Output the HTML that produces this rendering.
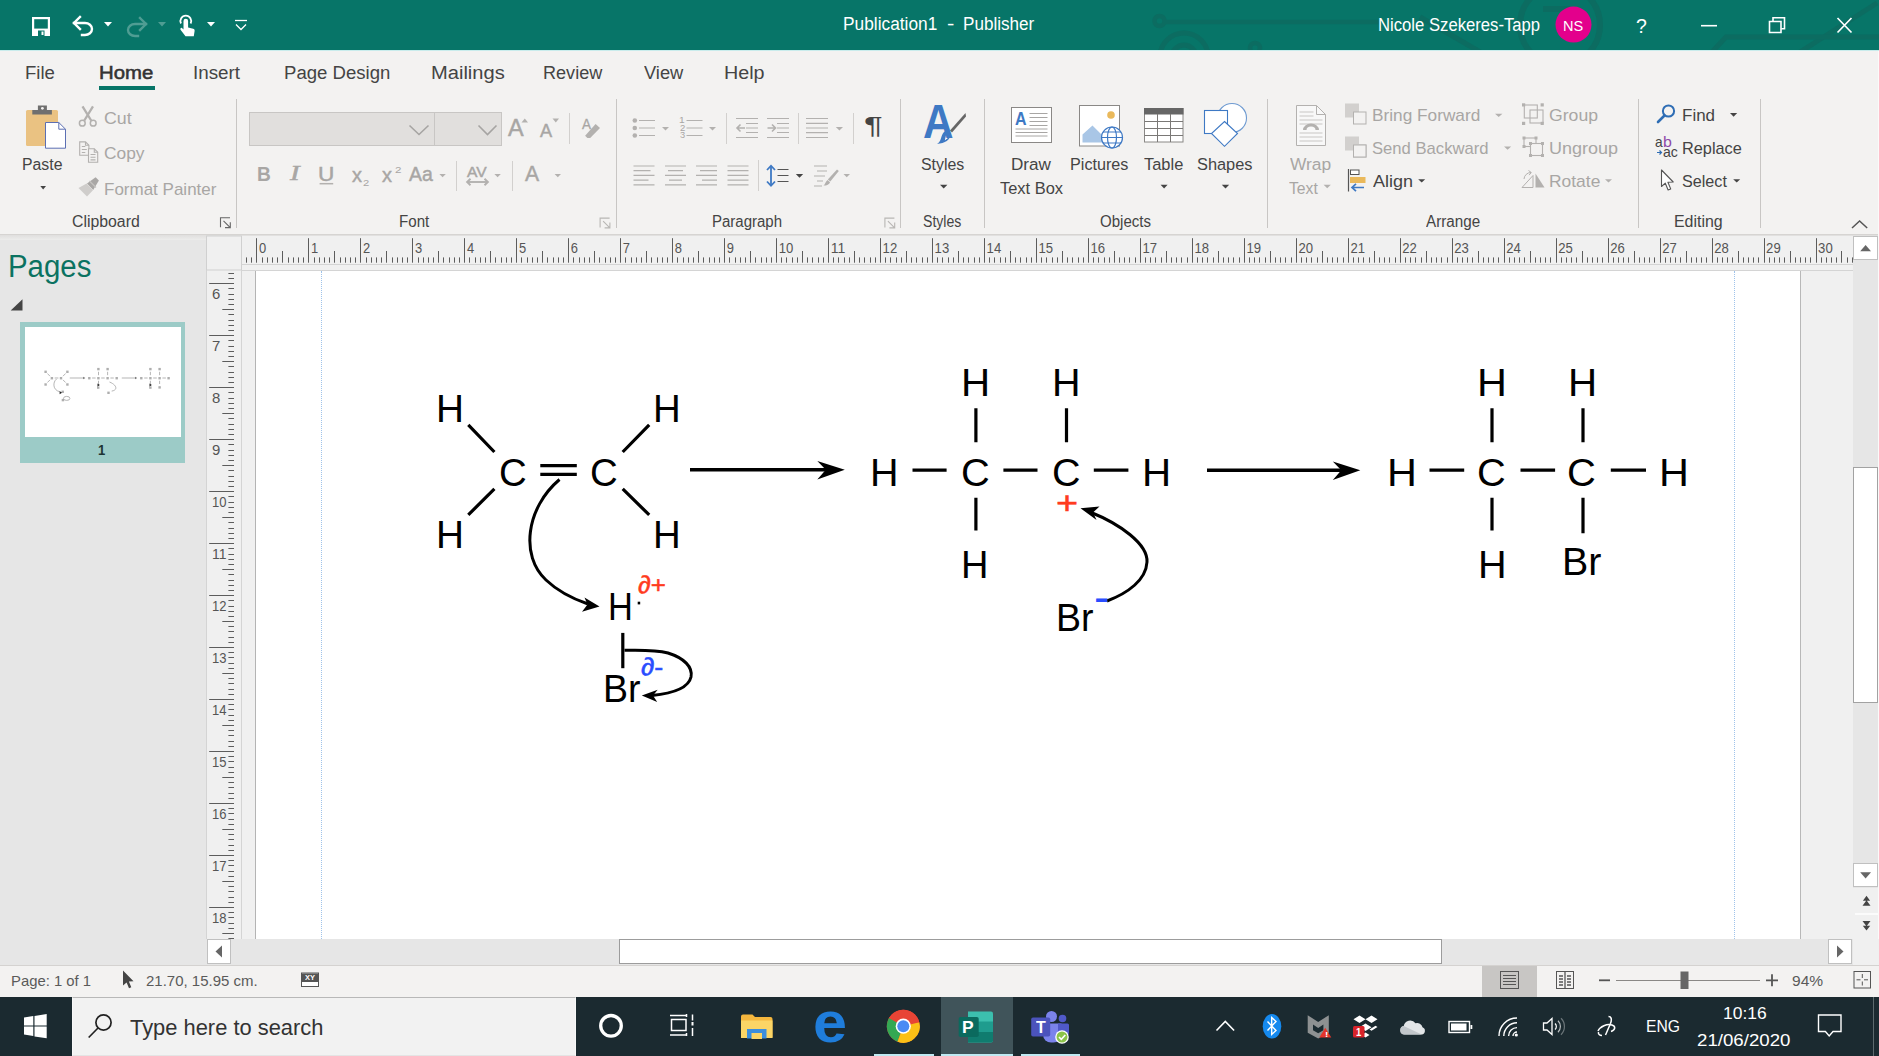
<!DOCTYPE html>
<html lang="en"><head><meta charset="utf-8"><title>Publication1 - Publisher</title>
<style>
html,body{margin:0;padding:0;}
body{width:1879px;height:1056px;overflow:hidden;position:relative;background:#f3f2f1;font-family:"Liberation Sans",sans-serif;}
.b{position:absolute;box-sizing:border-box;}
.t{position:absolute;white-space:pre;line-height:1;transform-origin:0 0;}
svg{position:absolute;left:0;top:0;overflow:visible;}
.sec{position:absolute;left:0;top:0;width:0;height:0;}
</style></head>
<body>
<section class="sec" id="title-and-tabs">
<!-- title bar -->
<div class="b " style="left:0px;top:0px;width:1879px;height:50px;background:#077568;"></div>
<div class="b " style="left:0px;top:50px;width:1879px;height:1px;background:#c9ecec;"></div>
<svg width="1879" height="50" viewBox="0 0 1879 50" style="overflow:hidden"><g fill="none" stroke="#0d6b60" stroke-width="4.500" opacity="0.850"><circle cx="1159.500" cy="21" r="5"/><path d="M1165 22H1380"/><circle cx="1184" cy="57" r="24" stroke-width="5"/><circle cx="1184" cy="57" r="12" stroke-width="5"/><circle cx="1255" cy="48" r="5"/><circle cx="1560" cy="25" r="40" stroke-width="6"/><path d="M1543 9h28" stroke-width="6"/><path d="M1877 3L1800 52" stroke-width="5"/><path d="M1879 37H1726L1712 52" stroke-width="5"/><path d="M1420 17l60 35" stroke-width="5"/></g><path d="M32 17h18v19H32z" fill="#fff"/><path d="M34.200 19.200h13.600v9.400H34.200z" fill="#077568"/><path d="M38 30.500h6.500v5.500H38z" fill="#077568"/><path d="M41.500 31.500h2v3.500h-2z" fill="#fff"/><g fill="none" stroke="#fff" stroke-width="2.4" stroke-linecap="square"><path d="M74 23h11a7 6 0 0 1 0 12h-3"/><path d="M80 17l-6 6 6 6"/></g><path d="M104 22h8l-4 4.5z" fill="#fff"/><g fill="none" stroke="#4f9d93" stroke-width="2.4" stroke-linecap="square"><path d="M146 24h-11a7 6 0 0 0 0 12h3"/><path d="M140 18l6 6-6 6"/></g><path d="M158 22h8l-4 4.5z" fill="#4f9d93"/><g fill="#fff"><path d="M183.5 21a2.3 2.3 0 0 1 4.6 0v6.5l5 1.2c1.2.3 1.7 1 1.5 2.2l-.8 5.3h-8.3l-4.8-6.2c-.8-1-.2-2.2 1-2.2l1.8 1.6z"/></g><path d="M181 23.5a5.4 5.4 0 1 1 9.6 0" fill="none" stroke="#fff" stroke-width="1.8"/><path d="M207 22h8l-4 4.5z" fill="#fff"/><path d="M235 20.5h12" stroke="#fff" stroke-width="1.3"/><path d="M236 24.5l5 5 5-5" fill="none" stroke="#fff" stroke-width="1.3"/><circle cx="1573.5" cy="24.6" r="18" fill="#e3008c"/><path d="M1701 25.7h16" stroke="#fff" stroke-width="1.6"/><g fill="none" stroke="#fff" stroke-width="1.6"><path d="M1769.5 21.5h11.5v11h-11.5z"/><path d="M1773 21v-3.2h11.5v11h-3.2"/></g><path d="M1837.5 18l14 14.5M1851.5 18l-14 14.5" stroke="#fff" stroke-width="1.7" fill="none"/></svg>
<span class="t" style="left:842.65px;top:15.50px;font-size:17.6px;color:#fff;transform:scaleX(0.9837);">Publication1</span>
<span class="t" style="left:946.56px;top:15.50px;font-size:17.6px;color:#fff;transform:scaleX(1.2571);">-</span>
<span class="t" style="left:963.36px;top:15.50px;font-size:17.6px;color:#fff;transform:scaleX(0.9713);">Publisher</span>
<span class="t" style="left:1377.50px;top:17.30px;font-size:17.6px;color:#fff;transform:scaleX(0.9471);">Nicole Szekeres-Tapp</span>
<span class="t" style="left:1562.81px;top:18.30px;font-size:15px;color:#fff;transform:scaleX(0.9695);">NS</span>
<span class="t" style="left:1636.30px;top:14.82px;font-size:21px;color:#fff;transform:scaleX(0.9268);">?</span>
<!-- ribbon tabs -->
<span class="t" style="left:24.52px;top:64.29px;font-size:18.8px;color:#444;transform:scaleX(0.9872);">File</span>
<span class="t" style="left:99.17px;top:64.29px;font-size:18.8px;color:#333;transform:scaleX(1.0834);-webkit-text-stroke:0.55px #333;">Home</span>
<div class="b " style="left:99px;top:86.3px;width:56px;height:4.2px;background:#077568;"></div>
<span class="t" style="left:193.17px;top:64.29px;font-size:18.8px;color:#444;transform:scaleX(1.0003);">Insert</span>
<span class="t" style="left:284.42px;top:64.29px;font-size:18.8px;color:#444;transform:scaleX(0.9883);">Page Design</span>
<span class="t" style="left:430.79px;top:64.29px;font-size:18.8px;color:#444;transform:scaleX(1.0704);">Mailings</span>
<span class="t" style="left:543.36px;top:64.29px;font-size:18.8px;color:#444;transform:scaleX(0.9621);">Review</span>
<span class="t" style="left:644.40px;top:64.29px;font-size:18.8px;color:#444;transform:scaleX(0.9740);">View</span>
<span class="t" style="left:724.12px;top:64.29px;font-size:18.8px;color:#444;transform:scaleX(1.0506);">Help</span>
</section>
<section class="sec" id="ribbon">
<!-- ribbon -->
<div class="b " style="left:0px;top:234px;width:1879px;height:1px;background:#d6d4d2;"></div>
<div class="b " style="left:0px;top:235px;width:1879px;height:5px;background:linear-gradient(#e0dfde,#ececeb);"></div>
<div class="b " style="left:235.9px;top:99px;width:1px;height:129px;background:#c8c6c4;"></div>
<div class="b " style="left:615.8px;top:99px;width:1px;height:129px;background:#c8c6c4;"></div>
<div class="b " style="left:900.1px;top:99px;width:1px;height:129px;background:#c8c6c4;"></div>
<div class="b " style="left:984.1px;top:99px;width:1px;height:129px;background:#c8c6c4;"></div>
<div class="b " style="left:1267.0px;top:99px;width:1px;height:129px;background:#c8c6c4;"></div>
<div class="b " style="left:1637.9px;top:99px;width:1px;height:129px;background:#c8c6c4;"></div>
<div class="b " style="left:1760.0px;top:99px;width:1px;height:129px;background:#c8c6c4;"></div>
<div class="b " style="left:569.0px;top:112.6px;width:1px;height:31.200000000000017px;background:#d2d0ce;"></div>
<div class="b " style="left:455.9px;top:161.4px;width:1px;height:30.099999999999994px;background:#d2d0ce;"></div>
<div class="b " style="left:512.0px;top:161.4px;width:1px;height:30.099999999999994px;background:#d2d0ce;"></div>
<div class="b " style="left:726.1px;top:113px;width:1px;height:31px;background:#d2d0ce;"></div>
<div class="b " style="left:797.8px;top:113px;width:1px;height:31px;background:#d2d0ce;"></div>
<div class="b " style="left:852.8px;top:113px;width:1px;height:31px;background:#d2d0ce;"></div>
<div class="b " style="left:757.9px;top:160.4px;width:1px;height:31.099999999999994px;background:#d2d0ce;"></div>
<div class="b " style="left:249px;top:112px;width:185.5px;height:33.5px;background:#e1dfdd;border:1px solid #c8c6c4"></div>
<div class="b " style="left:433.5px;top:112px;width:68.5px;height:33.5px;background:#e1dfdd;border:1px solid #c8c6c4"></div>
<svg width="1879" height="240" viewBox="0 0 1879 240"><rect x="26" y="110" width="32" height="36" rx="1.5" fill="#eac282"/><path d="M32.3 110h19.6v4.6H32.3z M37.9 105.4h9v5h-9z" fill="#6f6f6f"/><circle cx="42.4" cy="108.3" r="1.4" fill="#f3f2f1"/><path d="M45.5 122.5h13.3l6.7 6.7v19H45.5z" fill="#fff" stroke="#5c6fb3" stroke-width="1"/><path d="M58.8 122.5v6.7h6.7" fill="none" stroke="#5c6fb3" stroke-width="1"/><path d="M40.3 186H46L43.15 189.6z" fill="#444"/><g fill="none" stroke="#b3b1af"><path d="M82.500 106.300l8.700 14.200M93 106.300l-8.700 14.200" stroke-width="2.300"/><circle cx="82.300" cy="123.200" r="2.900" stroke-width="1.500"/><circle cx="93.200" cy="123.200" r="2.900" stroke-width="1.500"/></g><g fill="none" stroke="#b3b1af" stroke-width="1.100"><path d="M79.700 141.900h5.800l3.400 3.400v10H79.700z"/><path d="M85.500 141.900v3.400h3.400"/><path d="M81.800 146.500h3.500M81.800 149.500h5M81.800 152.500h3.500"/><path d="M88.500 148.800h5.800l3.400 3.400v10h-9.200z" fill="#f3f2f1"/><path d="M94.300 148.800v3.400h3.400"/><path d="M90.500 154.500h5M90.500 157.200h5M90.500 159.900h5"/></g><path d="M95.600 177.200l3.300 3.300-5.700 9.500-6.200-6.600z" fill="#a9a7a5"/><path d="M86.600 183.600l6.400 6.600-6 6.400-8.500-8.500z" fill="#cfcdcb"/><path d="M89.500 181l6.500 6.500" stroke="#c4c2c0" stroke-width="1.200"/><g fill="none" stroke="#666" stroke-width="1.1"><path d="M230 217.8H220.5V227.3"/><path d="M223.5 220.8L230 227.3M230.3 222.3V227.60000000000002H225"/></g><g fill="none" stroke="#b8b6b4" stroke-width="1.1"><path d="M609.6 218.1H600.1V227.6"/><path d="M603.1 221.1L609.6 227.6M609.9 222.6V227.9H604.6"/></g><g fill="none" stroke="#b8b6b4" stroke-width="1.1"><path d="M894.4 218.1H884.9V227.6"/><path d="M887.9 221.1L894.4 227.6M894.6999999999999 222.6V227.9H889.4"/></g><path d="M409.5 125.5L419.0 134.5L428.5 125.5" fill="none" stroke="#a6a4a2" stroke-width="1.6"/><path d="M478.5 125.5L487.5 134.5L496.5 125.5" fill="none" stroke="#a6a4a2" stroke-width="1.6"/><path d="M521.5 122.5h6.5l-3.25-4z" fill="#b3b1af"/><path d="M552.5 118.5h6.5l-3.25 4z" fill="#b3b1af"/><path d="M595.600 124.100l4.400 3.900-9.800 10h-2.800l-2.300-2.200z" fill="#b3b1af"/><path d="M439.4 174H445.8L442.6 177.2z" fill="#b3b1af"/><path d="M494.4 174H500.8L497.6 177.2z" fill="#b3b1af"/><path d="M554.6 174H561L557.8 177.2z" fill="#b3b1af"/><path d="M319.600 183.700h13.600" stroke="#b3b1af" stroke-width="1.500"/><g fill="none" stroke="#b3b1af" stroke-width="1.900"><path d="M467.500 182h20"/><path d="M470.500 178.700l-3.400 3.300 3.400 3.300M484.500 178.700l3.400 3.300-3.400 3.300"/></g><g stroke="#b3b1af" stroke-width="1.2" fill="none"><path d="M639 120.500h16M639 128h16M639 135.500h16"/></g><g fill="#b3b1af"><circle cx="634.800" cy="120.500" r="2.300"/><circle cx="634.800" cy="128" r="2.300"/><circle cx="634.800" cy="135.500" r="2.300"/></g><path d="M662 127H669L665.5 130.4z" fill="#b3b1af"/><g stroke="#b3b1af" stroke-width="1.2" fill="none"><path d="M686.500 120.500h16M686.500 128h16M686.500 135.500h16"/></g><path d="M709 127H716L712.5 130.4z" fill="#b3b1af"/><g stroke="#b3b1af" stroke-width="1.2" fill="none"><path d="M736 118.500h22M746 123.500h12M746 128h12M746 132.500h12M736 137.500h22"/><path d="M737 128h8M740.500 124.500l-3.500 3.500 3.500 3.500" stroke-width="1.600"/></g><g stroke="#b3b1af" stroke-width="1.2" fill="none"><path d="M767 118.500h22M777 123.500h12M777 128h12M777 132.500h12M767 137.500h22"/><path d="M767.500 128h8M772 124.500l3.500 3.500-3.500 3.500" stroke-width="1.600"/></g><g stroke="#b3b1af" stroke-width="1.2" fill="none"><path d="M806 118.500h22M806 123.300h22M806 128h22M806 132.700h22M806 137.500h22"/></g><path d="M835.8 127H843L839.4 130.4z" fill="#b3b1af"/><path d="M633.5 166.0h21M633.5 170.7h17M633.5 175.4h21M633.5 180.1h15M633.5 184.8h21" stroke="#b3b1af" stroke-width="1.2" fill="none"/><path d="M665.0 166.0h21M668.0 170.7h15M665.0 175.4h21M669.0 180.1h13M665.0 184.8h21" stroke="#b3b1af" stroke-width="1.2" fill="none"/><path d="M696.0 166.0h21M700.0 170.7h17M696.0 175.4h21M702.0 180.1h15M696.0 184.8h21" stroke="#b3b1af" stroke-width="1.2" fill="none"/><path d="M727.5 166.0h21M727.5 170.7h21M727.5 175.4h21M727.5 180.1h21M727.5 184.8h21" stroke="#b3b1af" stroke-width="1.2" fill="none"/><g fill="none" stroke="#3e79c4" stroke-width="1.800"><path d="M771 166v19"/><path d="M767 170l4-4.300 4 4.300M767 181.500l4 4.300 4-4.300"/></g><path d="M777.500 169.500h11M777.500 175.500h11M777.500 181.500h11" stroke="#555" stroke-width="1.100"/><path d="M795.8 174H803.2L799.5 177.7z" fill="#444"/><g stroke="#b3b1af" stroke-width="1.2" fill="none"><path d="M814 166h13M817 171h10M814 176h11M817 181h6M814 186h8"/></g><path d="M837 169.500l1.800 1.500-8.500 10.500-2.500-2z" fill="#b3b1af"/><path d="M827.500 180l2.600 2.200c-1 2.500-3.500 3.500-6.600 3.400 1.800-1.200 1.800-3.800 4-5.600z" fill="#b3b1af"/><path d="M843.5 174H850L846.75 177.2z" fill="#b3b1af"/><path d="M965.500 113l-15.500 17.500 2 2 14-16z" fill="#666"/><path d="M947 130.200l4 3.600c-.5 6-6 9.700-14 10.200 3.500-2 3.700-5.200 5-8.800 1-2.600 2.700-4.400 5-5z" fill="#3e79c4"/><path d="M947.300 131.800l2.700 2.400c-.6 2.500-2.500 4.700-5.200 6 1.200-3 1-6.400 2.500-8.400z" fill="#fff"/><path d="M940 184.8H947.4L943.7 188.6z" fill="#444"/><rect x="1011.500" y="107.500" width="40" height="35" fill="#fff" stroke="#8a8886" stroke-width="1"/><path d="M1029.500 113.500h18M1029.500 117.500h18M1029.500 121.500h18M1029.500 125.500h18M1015.500 129h32M1015.500 132.500h32M1015.500 136h32" stroke="#a8a6a4" stroke-width="1"/><rect x="1079.500" y="105.500" width="40" height="40.500" fill="#fff" stroke="#8a8886" stroke-width="1"/><circle cx="1111" cy="115" r="3.800" fill="#eab95b"/><path d="M1082.500 142.500v-8l10-9 8.500 8.500 2.500-2.500v11z" fill="#a9c6e6"/><g fill="#fff" stroke="#3e79c4" stroke-width="1.200"><circle cx="1112" cy="137.500" r="10.500"/><ellipse cx="1112" cy="137.500" rx="4.500" ry="10.500" fill="none"/><path d="M1101.500 137.500h21M1103 132h18M1103 143h18" fill="none"/></g><rect x="1144.500" y="108.500" width="38.500" height="33.500" fill="#fff" stroke="#8a8886" stroke-width="1"/><rect x="1144" y="108" width="39.500" height="6.500" fill="#666"/><path d="M1157.500 114v28M1170.500 114v28M1144.500 121.500h38.500M1144.500 128.500h38.500M1144.500 135.500h38.500" stroke="#7a7876" stroke-width="1" fill="none"/><path d="M1160.6 184.8H1167.6L1164.1 188.6z" fill="#444"/><g fill="#fff" stroke="#3e79c4" stroke-width="1.100"><circle cx="1232" cy="118" r="14.500" stroke="#6f9bd1"/><rect x="1204.500" y="110.500" width="23" height="23"/><path d="M1224.500 121.500l13 12-13 12.800-13-12.800z"/></g><path d="M1221.8 184.8H1229.2L1225.5 188.6z" fill="#444"/><path d="M1296.500 105.500h20l9 9v31h-29z" fill="#f8f8f8" stroke="#b3b1af" stroke-width="1"/><path d="M1316.500 105.500v9h9" fill="none" stroke="#b3b1af"/><path d="M1299.500 112h14M1299.500 116h14M1299.500 120h23M1299.500 124h23M1299.500 133h23M1299.500 137h23M1299.500 141h23" stroke="#c8c6c4" stroke-width="1"/><path d="M1303 130a8 6.500 0 0 1 16 0h-3.500a4.500 3.500 0 0 0-9 0z" fill="#b3b1af"/><path d="M1323.6 184.8H1330.8L1327.1999999999998 188.2z" fill="#b3b1af"/><rect x="1345" y="103.500" width="14" height="14" fill="#d2d0ce"/><rect x="1353.500" y="112" width="12.500" height="12" fill="#f3f2f1" stroke="#b3b1af" stroke-width="1"/><rect x="1353.500" y="145" width="12.500" height="12" fill="#f3f2f1" stroke="#b3b1af" stroke-width="1"/><rect x="1345" y="136.500" width="14" height="14" fill="#d2d0ce"/><rect x="1353.500" y="145" width="12.500" height="12" fill="#f3f2f1" stroke="#b3b1af" stroke-width="1"/><path d="M1495 113.8H1502.4L1498.7 117z" fill="#b3b1af"/><path d="M1504 146.5H1511.2L1507.6 149.7z" fill="#b3b1af"/><path d="M1348.500 169v22.500" stroke="#555" stroke-width="1.200"/><rect x="1350.500" y="170" width="8.500" height="4.500" fill="#fff" stroke="#555" stroke-width="1"/><rect x="1350" y="177" width="15.500" height="6" fill="#eab95b"/><path d="M1352 187.500h12M1356 183.800l-4 3.700 4 3.700" fill="none" stroke="#3e79c4" stroke-width="1.700"/><path d="M1418.2 179.2H1425.2L1421.7 182.6z" fill="#444"/><g fill="none" stroke="#b3b1af" stroke-width="1.100"><rect x="1524.300" y="105" width="13" height="13"/><rect x="1530" y="110" width="13" height="13"/></g><g fill="#b3b1af"><rect x="1522" y="103.300" width="3.200" height="3.200"/><rect x="1540.600" y="103.300" width="3.200" height="3.200"/><rect x="1522" y="121.800" width="3.200" height="3.200"/><rect x="1540.600" y="121.800" width="3.200" height="3.200"/></g><g fill="none" stroke="#b3b1af" stroke-width="1.100"><rect x="1524" y="138" width="12" height="8.500"/><rect x="1530.500" y="143.500" width="12" height="12" fill="#f3f2f1"/></g><g fill="#b3b1af"><rect x="1522.500" y="136.500" width="3" height="3"/><rect x="1534.500" y="136.500" width="3" height="3"/><rect x="1522.500" y="145" width="3" height="3"/><rect x="1529" y="142" width="3" height="3"/><rect x="1541" y="142" width="3" height="3"/><rect x="1529" y="154" width="3" height="3"/><rect x="1541" y="154" width="3" height="3"/></g><path d="M1535.500 173.500v14h9z" fill="#b3b1af"/><path d="M1533 175.500v12h-11z" fill="none" stroke="#b3b1af" stroke-width="1"/><path d="M1524 179a7 7 0 0 1 7-6.500M1528.500 170.500l2.800 2-2.200 2.600" fill="none" stroke="#b3b1af" stroke-width="1"/><path d="M1605 179.2H1612L1608.5 182.6z" fill="#b3b1af"/><circle cx="1668.500" cy="111" r="5.600" fill="none" stroke="#2e6db4" stroke-width="2"/><path d="M1664.500 115.500l-6.500 6.500" stroke="#2e6db4" stroke-width="2.600" stroke-linecap="round"/><path d="M1730 113H1737.2L1733.6 116.8z" fill="#444"/><path d="M1657 152.500h4.500M1659.500 150.500l2 2-2 2" fill="none" stroke="#2e6db4" stroke-width="1.200"/><path d="M1661.500 170v16.500l3.800-3.300 2.800 6.800 2.600-1.100-2.800-6.600 5.300-.3z" fill="#fff" stroke="#555" stroke-width="1.100" stroke-linejoin="round"/><path d="M1733.2 179.2H1740.2L1736.7 182.6z" fill="#444"/><path d="M1852 228l7.600-7 7.600 7" fill="none" stroke="#555" stroke-width="1.500"/></svg>
<span class="t" style="left:22.13px;top:156.99px;font-size:15.6px;color:#444;transform:scaleX(1.0141);">Paste</span>
<span class="t" style="left:103.62px;top:110.21px;font-size:17px;color:#a8a6a4;transform:scaleX(1.0466);">Cut</span>
<span class="t" style="left:103.64px;top:145.01px;font-size:17px;color:#a8a6a4;transform:scaleX(1.0196);">Copy</span>
<span class="t" style="left:103.92px;top:180.61px;font-size:17px;color:#a8a6a4;transform:scaleX(1.0001);">Format Painter</span>
<span class="t" style="left:72.26px;top:213.96px;font-size:16px;color:#444;transform:scaleX(0.9893);">Clipboard</span>
<span class="t" style="left:508.00px;top:117.11px;font-size:23.5px;color:#a8a6a4;transform:scaleX(0.9968);-webkit-text-stroke:0.45px;">A</span>
<span class="t" style="left:539.80px;top:120.92px;font-size:19px;color:#a8a6a4;transform:scaleX(0.9569);-webkit-text-stroke:0.45px;">A</span>
<span class="t" style="left:581.90px;top:115.70px;font-size:15px;color:#a8a6a4;transform:scaleX(0.9000);-webkit-text-stroke:0.3px;">A</span>
<span class="t" style="left:257.22px;top:164.12px;font-size:20.3px;color:#a8a6a4;font-weight:700;transform:scaleX(0.9440);">B</span>
<span class="t" style="left:289.67px;top:163.32px;font-size:21px;color:#a8a6a4;font-style:italic;transform:scaleX(1.3750);font-family:'Liberation Serif',serif;-webkit-text-stroke:0.5px;">I</span>
<span class="t" style="left:318.30px;top:164.47px;font-size:20px;color:#a8a6a4;transform:scaleX(1.1304);-webkit-text-stroke:0.45px;">U</span>
<span class="t" style="left:351.68px;top:164.57px;font-size:20px;color:#a8a6a4;transform:scaleX(0.9949);-webkit-text-stroke:0.45px;">x</span>
<span class="t" style="left:363.06px;top:178.26px;font-size:9.5px;color:#a8a6a4;transform:scaleX(1.1778);">2</span>
<span class="t" style="left:382.18px;top:164.57px;font-size:20px;color:#a8a6a4;transform:scaleX(0.9949);-webkit-text-stroke:0.45px;">x</span>
<span class="t" style="left:395.04px;top:164.96px;font-size:9.5px;color:#a8a6a4;transform:scaleX(1.2222);">2</span>
<span class="t" style="left:409.30px;top:164.15px;font-size:20.5px;color:#a8a6a4;transform:scaleX(0.9494);-webkit-text-stroke:0.45px;">Aa</span>
<span class="t" style="left:467.30px;top:163.85px;font-size:15.3px;color:#a8a6a4;transform:scaleX(1.0197);-webkit-text-stroke:0.45px;">AV</span>
<span class="t" style="left:524.80px;top:163.11px;font-size:22.2px;color:#a8a6a4;transform:scaleX(0.9546);-webkit-text-stroke:0.45px;">A</span>
<span class="t" style="left:398.82px;top:214.06px;font-size:16px;color:#444;transform:scaleX(0.9448);">Font</span>
<span class="t" style="left:679.25px;top:116.30px;font-size:8.5px;color:#a8a6a4;transform:scaleX(1.2000);">1</span>
<span class="t" style="left:679.58px;top:123.80px;font-size:8.5px;color:#a8a6a4;transform:scaleX(1.1250);">2</span>
<span class="t" style="left:679.73px;top:131.30px;font-size:8.5px;color:#a8a6a4;transform:scaleX(1.0909);">3</span>
<span class="t" style="left:863.73px;top:114.18px;font-size:24px;color:#444;transform:scaleX(1.4545);">¶</span>
<span class="t" style="left:711.53px;top:214.06px;font-size:16px;color:#444;transform:scaleX(0.9373);">Paragraph</span>
<span class="t" style="left:922.74px;top:98.29px;font-size:47.5px;color:#3e79c4;font-weight:700;transform:scaleX(0.8911);">A</span>
<span class="t" style="left:921.09px;top:156.00px;font-size:16.3px;color:#444;transform:scaleX(0.9762);">Styles</span>
<span class="t" style="left:923.25px;top:214.06px;font-size:16px;color:#444;transform:scaleX(0.8811);">Styles</span>
<span class="t" style="left:1015.48px;top:110.24px;font-size:18.5px;color:#3e79c4;font-weight:700;transform:scaleX(0.8640);">A</span>
<span class="t" style="left:1011.49px;top:156.00px;font-size:16.3px;color:#444;transform:scaleX(1.0519);">Draw</span>
<span class="t" style="left:1000.05px;top:179.80px;font-size:16.3px;color:#444;transform:scaleX(1.0097);">Text Box</span>
<span class="t" style="left:1070.06px;top:156.00px;font-size:16.3px;color:#444;transform:scaleX(0.9931);">Pictures</span>
<span class="t" style="left:1143.75px;top:156.00px;font-size:16.3px;color:#444;transform:scaleX(1.0100);">Table</span>
<span class="t" style="left:1196.87px;top:156.00px;font-size:16.3px;color:#444;transform:scaleX(1.0051);">Shapes</span>
<span class="t" style="left:1099.70px;top:214.06px;font-size:16px;color:#444;transform:scaleX(0.9398);">Objects</span>
<span class="t" style="left:1289.70px;top:156.00px;font-size:16.3px;color:#a8a6a4;transform:scaleX(1.0662);">Wrap</span>
<span class="t" style="left:1289.06px;top:179.80px;font-size:16.3px;color:#a8a6a4;transform:scaleX(0.9659);">Text</span>
<span class="t" style="left:1371.61px;top:107.21px;font-size:17px;color:#a8a6a4;transform:scaleX(1.0144);">Bring Forward</span>
<span class="t" style="left:1372.27px;top:140.21px;font-size:17px;color:#a8a6a4;transform:scaleX(0.9784);">Send Backward</span>
<span class="t" style="left:1372.50px;top:173.01px;font-size:17px;color:#444;transform:scaleX(1.0593);">Align</span>
<span class="t" style="left:1548.82px;top:107.21px;font-size:17px;color:#a8a6a4;transform:scaleX(1.0373);">Group</span>
<span class="t" style="left:1548.68px;top:140.21px;font-size:17px;color:#a8a6a4;transform:scaleX(1.0592);">Ungroup</span>
<span class="t" style="left:1548.59px;top:173.01px;font-size:17px;color:#a8a6a4;transform:scaleX(1.0248);">Rotate</span>
<span class="t" style="left:1425.50px;top:214.06px;font-size:16px;color:#444;transform:scaleX(0.9507);">Arrange</span>
<span class="t" style="left:1681.73px;top:107.21px;font-size:17px;color:#444;transform:scaleX(0.9995);">Find</span>
<span class="t" style="left:1681.78px;top:140.41px;font-size:17px;color:#444;transform:scaleX(0.9587);">Replace</span>
<span class="t" style="left:1681.99px;top:173.11px;font-size:17px;color:#444;transform:scaleX(0.9504);">Select</span>
<span class="t" style="left:1674.36px;top:213.76px;font-size:16px;color:#444;transform:scaleX(0.9947);">Editing</span>
<span class="t" style="left:1654.63px;top:133.80px;font-size:15px;color:#444;transform:scaleX(0.9161);">a</span>
<span class="t" style="left:1663.27px;top:133.80px;font-size:15px;color:#8e4aa8;transform:scaleX(1.0618);">b</span>
<span class="t" style="left:1662.91px;top:144.30px;font-size:15px;color:#444;transform:scaleX(0.9365);">ac</span>
</section>
<section class="sec" id="workspace">
<!-- page navigation pane -->
<div class="b " style="left:0px;top:240px;width:206px;height:725px;background:#e6e6e6;"></div>
<span class="t" style="left:8.33px;top:251.06px;font-size:31px;color:#0b7261;transform:scaleX(0.9491);">Pages</span>
<div class="b " style="left:20.3px;top:322px;width:164.7px;height:141.2px;background:#9ccbc7;"></div>
<div class="b " style="left:24.6px;top:327px;width:156px;height:110px;background:#fff;"></div>
<span class="t" style="left:98.14px;top:442.10px;font-size:15px;color:#1e3433;font-weight:700;transform:scaleX(0.8702);">1</span>
<!-- workspace -->
<div class="b " style="left:206px;top:235.5px;width:1647.4px;height:704px;background:#f0f0f0;"></div>
<div class="b " style="left:255px;top:270.5px;width:1546px;height:668.5px;background:#fff;border-left:1px solid #b4b4b4;border-right:1px solid #b8b8b8"></div>
<div class="b " style="left:320.9px;top:271px;width:0px;height:668px;background:transparent;border-left:1px dotted #9fc3ea"></div>
<div class="b " style="left:1733.8px;top:271px;width:0px;height:668px;background:transparent;border-left:1px dotted #9fc3ea"></div>
<svg width="1879" height="1056" viewBox="0 0 1879 1056"><path d="M22.500 299.300v11.200h-11.800z" fill="#444"/><rect x="206.500" y="236" width="35" height="34" fill="#f0f0f0" stroke="#d0d0d0"/><path d="M241.500 264.500H1853M241.500 270.500H1853M206.500 270v669.500M241.500 270v669.500" stroke="#d4d4d4" fill="none"/><path d="M246.5 257.4V262.700M251.5 257.4V262.700M256.5 238.2V262.700M262.5 257.4V262.700M267.5 257.4V262.700M272.5 257.4V262.700M277.5 257.4V262.700M282.5 251.0V262.700M288.5 257.4V262.700M293.5 257.4V262.700M298.5 257.4V262.700M303.5 257.4V262.700M308.5 238.2V262.700M314.5 257.4V262.700M319.5 257.4V262.700M324.5 257.4V262.700M329.5 257.4V262.700M334.5 251.0V262.700M340.5 257.4V262.700M345.5 257.4V262.700M350.5 257.4V262.700M355.5 257.4V262.700M360.5 238.2V262.700M366.5 257.4V262.700M371.5 257.4V262.700M376.5 257.4V262.700M381.5 257.4V262.700M386.5 251.0V262.700M392.5 257.4V262.700M397.5 257.4V262.700M402.5 257.4V262.700M407.5 257.4V262.700M412.5 238.2V262.700M418.5 257.4V262.700M423.5 257.4V262.700M428.5 257.4V262.700M433.5 257.4V262.700M438.5 251.0V262.700M443.5 257.4V262.700M449.5 257.4V262.700M454.5 257.4V262.700M459.5 257.4V262.700M464.5 238.2V262.700M469.5 257.4V262.700M475.5 257.4V262.700M480.5 257.4V262.700M485.5 257.4V262.700M490.5 251.0V262.700M495.5 257.4V262.700M501.5 257.4V262.700M506.5 257.4V262.700M511.5 257.4V262.700M516.5 238.2V262.700M521.5 257.4V262.700M527.5 257.4V262.700M532.5 257.4V262.700M537.5 257.4V262.700M542.5 251.0V262.700M547.5 257.4V262.700M553.5 257.4V262.700M558.5 257.4V262.700M563.5 257.4V262.700M568.5 238.2V262.700M573.5 257.4V262.700M579.5 257.4V262.700M584.5 257.4V262.700M589.5 257.4V262.700M594.5 251.0V262.700M599.5 257.4V262.700M605.5 257.4V262.700M610.5 257.4V262.700M615.5 257.4V262.700M620.5 238.2V262.700M625.5 257.4V262.700M631.5 257.4V262.700M636.5 257.4V262.700M641.5 257.4V262.700M646.5 251.0V262.700M651.5 257.4V262.700M657.5 257.4V262.700M662.5 257.4V262.700M667.5 257.4V262.700M672.5 238.2V262.700M677.5 257.4V262.700M683.5 257.4V262.700M688.5 257.4V262.700M693.5 257.4V262.700M698.5 251.0V262.700M703.5 257.4V262.700M709.5 257.4V262.700M714.5 257.4V262.700M719.5 257.4V262.700M724.5 238.2V262.700M729.5 257.4V262.700M735.5 257.4V262.700M740.5 257.4V262.700M745.5 257.4V262.700M750.5 251.0V262.700M755.5 257.4V262.700M761.5 257.4V262.700M766.5 257.4V262.700M771.5 257.4V262.700M776.5 238.2V262.700M781.5 257.4V262.700M786.5 257.4V262.700M792.5 257.4V262.700M797.5 257.4V262.700M802.5 251.0V262.700M807.5 257.4V262.700M812.5 257.4V262.700M818.5 257.4V262.700M823.5 257.4V262.700M828.5 238.2V262.700M833.5 257.4V262.700M838.5 257.4V262.700M844.5 257.4V262.700M849.5 257.4V262.700M854.5 251.0V262.700M859.5 257.4V262.700M864.5 257.4V262.700M870.5 257.4V262.700M875.5 257.4V262.700M880.5 238.2V262.700M885.5 257.4V262.700M890.5 257.4V262.700M896.5 257.4V262.700M901.5 257.4V262.700M906.5 251.0V262.700M911.5 257.4V262.700M916.5 257.4V262.700M922.5 257.4V262.700M927.5 257.4V262.700M932.5 238.2V262.700M937.5 257.4V262.700M942.5 257.4V262.700M948.5 257.4V262.700M953.5 257.4V262.700M958.5 251.0V262.700M963.5 257.4V262.700M968.5 257.4V262.700M974.5 257.4V262.700M979.5 257.4V262.700M984.5 238.2V262.700M989.5 257.4V262.700M994.5 257.4V262.700M1000.5 257.4V262.700M1005.5 257.4V262.700M1010.5 251.0V262.700M1015.5 257.4V262.700M1020.5 257.4V262.700M1026.5 257.4V262.700M1031.5 257.4V262.700M1036.5 238.2V262.700M1041.5 257.4V262.700M1046.5 257.4V262.700M1052.5 257.4V262.700M1057.5 257.4V262.700M1062.5 251.0V262.700M1067.5 257.4V262.700M1072.5 257.4V262.700M1078.5 257.4V262.700M1083.5 257.4V262.700M1088.5 238.2V262.700M1093.5 257.4V262.700M1098.5 257.4V262.700M1104.5 257.4V262.700M1109.5 257.4V262.700M1114.5 251.0V262.700M1119.5 257.4V262.700M1124.5 257.4V262.700M1129.5 257.4V262.700M1135.5 257.4V262.700M1140.5 238.2V262.700M1145.5 257.4V262.700M1150.5 257.4V262.700M1155.5 257.4V262.700M1161.5 257.4V262.700M1166.5 251.0V262.700M1171.5 257.4V262.700M1176.5 257.4V262.700M1181.5 257.4V262.700M1187.5 257.4V262.700M1192.5 238.2V262.700M1197.5 257.4V262.700M1202.5 257.4V262.700M1207.5 257.4V262.700M1213.5 257.4V262.700M1218.5 251.0V262.700M1223.5 257.4V262.700M1228.5 257.4V262.700M1233.5 257.4V262.700M1239.5 257.4V262.700M1244.5 238.2V262.700M1249.5 257.4V262.700M1254.5 257.4V262.700M1259.5 257.4V262.700M1265.5 257.4V262.700M1270.5 251.0V262.700M1275.5 257.4V262.700M1280.5 257.4V262.700M1285.5 257.4V262.700M1291.5 257.4V262.700M1296.5 238.2V262.700M1301.5 257.4V262.700M1306.5 257.4V262.700M1311.5 257.4V262.700M1317.5 257.4V262.700M1322.5 251.0V262.700M1327.5 257.4V262.700M1332.5 257.4V262.700M1337.5 257.4V262.700M1343.5 257.4V262.700M1348.5 238.2V262.700M1353.5 257.4V262.700M1358.5 257.4V262.700M1363.5 257.4V262.700M1369.5 257.4V262.700M1374.5 251.0V262.700M1379.5 257.4V262.700M1384.5 257.4V262.700M1389.5 257.4V262.700M1395.5 257.4V262.700M1400.5 238.2V262.700M1405.5 257.4V262.700M1410.5 257.4V262.700M1415.5 257.4V262.700M1421.5 257.4V262.700M1426.5 251.0V262.700M1431.5 257.4V262.700M1436.5 257.4V262.700M1441.5 257.4V262.700M1447.5 257.4V262.700M1452.5 238.2V262.700M1457.5 257.4V262.700M1462.5 257.4V262.700M1467.5 257.4V262.700M1472.5 257.4V262.700M1478.5 251.0V262.700M1483.5 257.4V262.700M1488.5 257.4V262.700M1493.5 257.4V262.700M1498.5 257.4V262.700M1504.5 238.2V262.700M1509.5 257.4V262.700M1514.5 257.4V262.700M1519.5 257.4V262.700M1524.5 257.4V262.700M1530.5 251.0V262.700M1535.5 257.4V262.700M1540.5 257.4V262.700M1545.5 257.4V262.700M1550.5 257.4V262.700M1556.5 238.2V262.700M1561.5 257.4V262.700M1566.5 257.4V262.700M1571.5 257.4V262.700M1576.5 257.4V262.700M1582.5 251.0V262.700M1587.5 257.4V262.700M1592.5 257.4V262.700M1597.5 257.4V262.700M1602.5 257.4V262.700M1608.5 238.2V262.700M1613.5 257.4V262.700M1618.5 257.4V262.700M1623.5 257.4V262.700M1628.5 257.4V262.700M1634.5 251.0V262.700M1639.5 257.4V262.700M1644.5 257.4V262.700M1649.5 257.4V262.700M1654.5 257.4V262.700M1660.5 238.2V262.700M1665.5 257.4V262.700M1670.5 257.4V262.700M1675.5 257.4V262.700M1680.5 257.4V262.700M1686.5 251.0V262.700M1691.5 257.4V262.700M1696.5 257.4V262.700M1701.5 257.4V262.700M1706.5 257.4V262.700M1712.5 238.2V262.700M1717.5 257.4V262.700M1722.5 257.4V262.700M1727.5 257.4V262.700M1732.5 257.4V262.700M1738.5 251.0V262.700M1743.5 257.4V262.700M1748.5 257.4V262.700M1753.5 257.4V262.700M1758.5 257.4V262.700M1764.5 238.2V262.700M1769.5 257.4V262.700M1774.5 257.4V262.700M1779.5 257.4V262.700M1784.5 257.4V262.700M1790.5 251.0V262.700M1795.5 257.4V262.700M1800.5 257.4V262.700M1805.5 257.4V262.700M1810.5 257.4V262.700M1816.5 238.2V262.700M1821.5 257.4V262.700M1826.5 257.4V262.700M1831.5 257.4V262.700M1836.5 257.4V262.700M1841.5 251.0V262.700M1847.5 257.4V262.700M1852.5 257.4V262.700" stroke="#5c5c5c" stroke-width="1" fill="none"/><path d="M228.4 273.5H234M228.4 278.5H234M209.2 283.5H234M228.4 288.5H234M228.4 294.5H234M228.4 299.5H234M228.4 304.5H234M222.3 309.5H234M228.4 314.5H234M228.4 320.5H234M228.4 325.5H234M228.4 330.5H234M209.2 335.5H234M228.4 340.5H234M228.4 346.5H234M228.4 351.5H234M228.4 356.5H234M222.3 361.5H234M228.4 366.5H234M228.4 372.5H234M228.4 377.5H234M228.4 382.5H234M209.2 387.5H234M228.4 392.5H234M228.4 398.5H234M228.4 403.5H234M228.4 408.5H234M222.3 413.5H234M228.4 418.5H234M228.4 424.5H234M228.4 429.5H234M228.4 434.5H234M209.2 439.5H234M228.4 444.5H234M228.4 450.5H234M228.4 455.5H234M228.4 460.5H234M222.3 465.5H234M228.4 470.5H234M228.4 476.5H234M228.4 481.5H234M228.4 486.5H234M209.2 491.5H234M228.4 496.5H234M228.4 502.5H234M228.4 507.5H234M228.4 512.5H234M222.3 517.5H234M228.4 522.5H234M228.4 528.5H234M228.4 533.5H234M228.4 538.5H234M209.2 543.5H234M228.4 548.5H234M228.4 554.5H234M228.4 559.5H234M228.4 564.5H234M222.3 569.5H234M228.4 574.5H234M228.4 580.5H234M228.4 585.5H234M228.4 590.5H234M209.2 595.5H234M228.4 600.5H234M228.4 606.5H234M228.4 611.5H234M228.4 616.5H234M222.3 621.5H234M228.4 626.5H234M228.4 631.5H234M228.4 637.5H234M228.4 642.5H234M209.2 647.5H234M228.4 652.5H234M228.4 657.5H234M228.4 663.5H234M228.4 668.5H234M222.3 673.5H234M228.4 678.5H234M228.4 683.5H234M228.4 689.5H234M228.4 694.5H234M209.2 699.5H234M228.4 704.5H234M228.4 709.5H234M228.4 715.5H234M228.4 720.5H234M222.3 725.5H234M228.4 730.5H234M228.4 735.5H234M228.4 741.5H234M228.4 746.5H234M209.2 751.5H234M228.4 756.5H234M228.4 761.5H234M228.4 767.5H234M228.4 772.5H234M222.3 777.5H234M228.4 782.5H234M228.4 787.5H234M228.4 793.5H234M228.4 798.5H234M209.2 803.5H234M228.4 808.5H234M228.4 813.5H234M228.4 819.5H234M228.4 824.5H234M222.3 829.5H234M228.4 834.5H234M228.4 839.5H234M228.4 845.5H234M228.4 850.5H234M209.2 855.5H234M228.4 860.5H234M228.4 865.5H234M228.4 871.5H234M228.4 876.5H234M222.3 881.5H234M228.4 886.5H234M228.4 891.5H234M228.4 897.5H234M228.4 902.5H234M209.2 907.5H234M228.4 912.5H234M228.4 917.5H234M228.4 923.5H234M228.4 928.5H234M222.3 933.5H234M228.4 938.5H234" stroke="#5c5c5c" stroke-width="1" fill="none"/><g font-family="Liberation Sans, sans-serif" font-size="14.500" fill="#555"><text x="259.0" y="253.300" textLength="7.2" lengthAdjust="spacingAndGlyphs">0</text><text x="311.0" y="253.300" textLength="7.2" lengthAdjust="spacingAndGlyphs">1</text><text x="362.9" y="253.300" textLength="7.2" lengthAdjust="spacingAndGlyphs">2</text><text x="414.9" y="253.300" textLength="7.2" lengthAdjust="spacingAndGlyphs">3</text><text x="466.9" y="253.300" textLength="7.2" lengthAdjust="spacingAndGlyphs">4</text><text x="518.9" y="253.300" textLength="7.2" lengthAdjust="spacingAndGlyphs">5</text><text x="570.8" y="253.300" textLength="7.2" lengthAdjust="spacingAndGlyphs">6</text><text x="622.8" y="253.300" textLength="7.2" lengthAdjust="spacingAndGlyphs">7</text><text x="674.8" y="253.300" textLength="7.2" lengthAdjust="spacingAndGlyphs">8</text><text x="726.7" y="253.300" textLength="7.2" lengthAdjust="spacingAndGlyphs">9</text><text x="778.7" y="253.300" textLength="14.6" lengthAdjust="spacingAndGlyphs">10</text><text x="830.7" y="253.300" textLength="14.6" lengthAdjust="spacingAndGlyphs">11</text><text x="882.6" y="253.300" textLength="14.6" lengthAdjust="spacingAndGlyphs">12</text><text x="934.6" y="253.300" textLength="14.6" lengthAdjust="spacingAndGlyphs">13</text><text x="986.6" y="253.300" textLength="14.6" lengthAdjust="spacingAndGlyphs">14</text><text x="1038.5" y="253.300" textLength="14.6" lengthAdjust="spacingAndGlyphs">15</text><text x="1090.5" y="253.300" textLength="14.6" lengthAdjust="spacingAndGlyphs">16</text><text x="1142.5" y="253.300" textLength="14.6" lengthAdjust="spacingAndGlyphs">17</text><text x="1194.5" y="253.300" textLength="14.6" lengthAdjust="spacingAndGlyphs">18</text><text x="1246.4" y="253.300" textLength="14.6" lengthAdjust="spacingAndGlyphs">19</text><text x="1298.4" y="253.300" textLength="14.6" lengthAdjust="spacingAndGlyphs">20</text><text x="1350.4" y="253.300" textLength="14.6" lengthAdjust="spacingAndGlyphs">21</text><text x="1402.3" y="253.300" textLength="14.6" lengthAdjust="spacingAndGlyphs">22</text><text x="1454.3" y="253.300" textLength="14.6" lengthAdjust="spacingAndGlyphs">23</text><text x="1506.3" y="253.300" textLength="14.6" lengthAdjust="spacingAndGlyphs">24</text><text x="1558.2" y="253.300" textLength="14.6" lengthAdjust="spacingAndGlyphs">25</text><text x="1610.2" y="253.300" textLength="14.6" lengthAdjust="spacingAndGlyphs">26</text><text x="1662.2" y="253.300" textLength="14.6" lengthAdjust="spacingAndGlyphs">27</text><text x="1714.2" y="253.300" textLength="14.6" lengthAdjust="spacingAndGlyphs">28</text><text x="1766.1" y="253.300" textLength="14.6" lengthAdjust="spacingAndGlyphs">29</text><text x="1818.1" y="253.300" textLength="14.6" lengthAdjust="spacingAndGlyphs">30</text><text x="212" y="299.3" textLength="8.300" lengthAdjust="spacingAndGlyphs">6</text><text x="212" y="351.3" textLength="8.300" lengthAdjust="spacingAndGlyphs">7</text><text x="212" y="403.2" textLength="8.300" lengthAdjust="spacingAndGlyphs">8</text><text x="212" y="455.2" textLength="8.300" lengthAdjust="spacingAndGlyphs">9</text><text x="212" y="507.2" textLength="14.500" lengthAdjust="spacingAndGlyphs">10</text><text x="212" y="559.2" textLength="14.500" lengthAdjust="spacingAndGlyphs">11</text><text x="212" y="611.1" textLength="14.500" lengthAdjust="spacingAndGlyphs">12</text><text x="212" y="663.1" textLength="14.500" lengthAdjust="spacingAndGlyphs">13</text><text x="212" y="715.1" textLength="14.500" lengthAdjust="spacingAndGlyphs">14</text><text x="212" y="767.0" textLength="14.500" lengthAdjust="spacingAndGlyphs">15</text><text x="212" y="819.0" textLength="14.500" lengthAdjust="spacingAndGlyphs">16</text><text x="212" y="871.0" textLength="14.500" lengthAdjust="spacingAndGlyphs">17</text><text x="212" y="922.9" textLength="14.500" lengthAdjust="spacingAndGlyphs">18</text></g><g stroke="#9a9a9a" stroke-width="0.8" fill="none" opacity="0.9"><path d="M47.4 373.5L50.0 376.2"/><path d="M65.6 373.5L63.0 376.2"/><path d="M50.0 379.9L47.4 382.5"/><path d="M63.0 379.9L65.6 382.5"/><path d="M54.7 378.0L58.4 378.0"/><path d="M69.8 378.0L84.3 378.0"/><path d="M121.8 378.0L136.1 378.0"/><path d="M92.1 378.0L95.6 378.0"/><path d="M101.2 378.0L104.7 378.0"/><path d="M110.4 378.0L113.8 378.0"/><path d="M144.2 378.0L147.6 378.0"/><path d="M153.2 378.0L156.8 378.0"/><path d="M162.4 378.0L165.9 378.0"/><path d="M98.5 371.8L98.5 375.2"/><path d="M107.6 371.8L107.6 375.2"/><path d="M150.4 371.8L150.4 375.2"/><path d="M159.6 371.8L159.6 375.2"/><path d="M98.5 380.8L98.5 384.0"/><path d="M150.4 380.8L150.4 384.0"/><path d="M159.6 380.8L159.6 384.0"/><path d="M56.6 379.0C52.6 382.0 52.6 390.1 59.7 391.7"/><path d="M109.5 382.0C117.0 385.0 118.0 390.1 111.7 391.1"/><ellipse cx="66.7" cy="398.4" rx="3.200" ry="2"/></g><g fill="#9a9a9a"><rect x="44.4" y="370.6" width="2.400" height="2.400" opacity="0.8"/><rect x="66.2" y="370.6" width="2.400" height="2.400" opacity="0.8"/><rect x="44.4" y="383.3" width="2.400" height="2.400" opacity="0.8"/><rect x="66.2" y="383.3" width="2.400" height="2.400" opacity="0.8"/><rect x="50.7" y="377.0" width="2.400" height="2.400" opacity="0.8"/><rect x="59.8" y="377.0" width="2.400" height="2.400" opacity="0.8"/><rect x="61.5" y="390.6" width="2.400" height="2.400" opacity="0.8"/><rect x="61.7" y="398.9" width="2.400" height="2.400" opacity="0.8"/><rect x="97.2" y="367.9" width="2.400" height="2.400" opacity="0.8"/><rect x="106.4" y="367.9" width="2.400" height="2.400" opacity="0.8"/><rect x="88.1" y="377.0" width="2.400" height="2.400" opacity="0.8"/><rect x="97.2" y="377.0" width="2.400" height="2.400" opacity="0.8"/><rect x="106.4" y="377.0" width="2.400" height="2.400" opacity="0.8"/><rect x="115.5" y="377.0" width="2.400" height="2.400" opacity="0.8"/><rect x="97.0" y="386.4" width="2.400" height="2.400" opacity="0.8"/><rect x="107.3" y="391.6" width="2.400" height="2.400" opacity="0.8"/><rect x="149.2" y="367.9" width="2.400" height="2.400" opacity="0.8"/><rect x="158.4" y="367.9" width="2.400" height="2.400" opacity="0.8"/><rect x="140.1" y="377.0" width="2.400" height="2.400" opacity="0.8"/><rect x="149.2" y="377.0" width="2.400" height="2.400" opacity="0.8"/><rect x="158.4" y="377.0" width="2.400" height="2.400" opacity="0.8"/><rect x="167.4" y="377.0" width="2.400" height="2.400" opacity="0.8"/><rect x="149.2" y="386.4" width="2.400" height="2.400" opacity="0.8"/><rect x="158.4" y="386.2" width="2.400" height="2.400" opacity="0.8"/></g><path d="M85.3 378.0l-2.200-1.200v2.400z" fill="#777"/><path d="M137.2 378.0l-2.200-1.200v2.400z" fill="#777"/><path d="M62.0 392.7l-2.400-1.600v3.200z" fill="#222"/><path d="M99.9 385.0l-2.400-1.600v3.200z" fill="#222"/><path d="M151.9 385.0l-2.400-1.600v3.200z" fill="#222"/></svg>
<!-- scrollbars -->
<div class="b " style="left:1877.6px;top:51px;width:1.4px;height:946px;background:#fafafa;"></div>
<div class="b " style="left:1853.4px;top:235.5px;width:24.6px;height:704px;background:#e6e6e6;"></div>
<div class="b " style="left:1853.4px;top:236px;width:24.4px;height:23.5px;background:#fff;border:1px solid #c0c0c0"></div>
<div class="b " style="left:1853.4px;top:466.5px;width:24.4px;height:236px;background:#fff;border:1px solid #a2a2a2"></div>
<div class="b " style="left:1853.4px;top:863.3px;width:24.4px;height:23.4px;background:#fff;border:1px solid #c0c0c0"></div>
<div class="b " style="left:1853.4px;top:888px;width:24.6px;height:51.5px;background:#f0f0f0;"></div>
<div class="b " style="left:1855px;top:913.2px;width:23px;height:1.5px;background:#fbfbfb;"></div>
<div class="b " style="left:206px;top:939px;width:1647.4px;height:26px;background:#e6e6e6;"></div>
<div class="b " style="left:1852.5px;top:939px;width:26.5px;height:26px;background:#f0f0f0;"></div>
<div class="b " style="left:207px;top:939.2px;width:23.5px;height:24.6px;background:#fff;border:1px solid #c0c0c0"></div>
<div class="b " style="left:1828px;top:939.2px;width:24px;height:24.6px;background:#fff;border:1px solid #c0c0c0"></div>
<div class="b " style="left:619px;top:939px;width:823px;height:24.8px;background:#fff;border:1px solid #9c9c9c"></div>
<svg width="1879" height="1056" viewBox="0 0 1879 1056"><g fill="#666"><path d="M1860.200 251.200h10.800l-5.400-6.300z"/><path d="M1860.200 872.300h10.800l-5.400 6.300z"/><path d="M222 945.500v12l-6.500-6z"/><path d="M1837 945.500v12l6.500-6z"/></g><g fill="#444"><path d="M1866.500 895.800l3.600 5h-7.200zM1866.500 900.300l4 5.400h-8z"/><path d="M1862.500 921h8l-4 5.200zM1862.800 925.700h7.400l-3.700 4.800z"/></g></svg>
</section>
<section class="sec" id="publication-page">
<!-- chemistry diagram -->
<svg width="1879" height="1056" viewBox="0 0 1879 1056"><g fill="none" stroke="#000" stroke-width="3.200"><path d="M468.300 424.900L494.400 452M649.200 424.900L622.700 452M494.400 488.900L468.300 514.900M622.700 488.900L649.200 514.900"/><path d="M540.300 465.600H576.800M540.300 474.300H576.800"/><path d="M690 469.800H828M1207 470.200H1344" stroke-width="3.500"/><path d="M912.500 470.200H946.600M1003.400 470.200H1037.500M1093.800 470.200H1128.400"/><path d="M975.900 408.200V442.300M1066.500 408.200V442.300M975.900 497.700V530.400"/><path d="M1429.500 470.200H1464.200M1520.500 470.200H1555.100M1610.800 470.200H1646"/><path d="M1492 408.200V442.300M1583 408.200V442.300M1492 497.700V530.400M1583 497.700V533.200"/><path d="M622.800 632.900V668.200"/><path d="M559.500 479.500C526 508 520 556 546 580C557 590.500 572 598.500 588 604" stroke-width="3"/><path d="M624.500 650.300C640 650 655 649.500 668 653C684 658 693 667 691 677C688.500 688 672 693.500 652 695.500" stroke-width="3"/><path d="M1090 512C1120 524 1148 544 1147 562C1146 580 1128 593 1107 601" stroke-width="3"/></g><path d="M844.800 469.800L817.300 461L825.800 469.800L817.300 479.600z"/><path d="M1360.300 470.200L1332.800 461.400L1341.300 470.200L1332.800 480z"/><path d="M599.500 606.500L582 611.800L587.500 604.500L584.500 597.500z"/><path d="M641.800 695.400L657.700 689.800L653 695.400L657.200 702z"/><path d="M1080.500 508.300L1099.500 506.500L1093 512.500L1096.500 520z"/><rect x="637.700" y="601.700" width="2.500" height="2.700"/></svg>
<span class="t" style="left:435.87px;top:389.53px;font-size:38px;color:#000;transform:scaleX(1.0199);">H</span>
<span class="t" style="left:653.40px;top:389.53px;font-size:38px;color:#000;transform:scaleX(1.0105);">H</span>
<span class="t" style="left:435.87px;top:516.03px;font-size:38px;color:#000;transform:scaleX(1.0199);">H</span>
<span class="t" style="left:653.40px;top:516.03px;font-size:38px;color:#000;transform:scaleX(1.0105);">H</span>
<span class="t" style="left:608.21px;top:588.03px;font-size:38px;color:#000;transform:scaleX(0.9076);">H</span>
<span class="t" style="left:961.05px;top:363.53px;font-size:38px;color:#000;transform:scaleX(1.0620);">H</span>
<span class="t" style="left:1052.02px;top:363.53px;font-size:38px;color:#000;transform:scaleX(1.0386);">H</span>
<span class="t" style="left:870.22px;top:453.83px;font-size:38px;color:#000;transform:scaleX(1.0386);">H</span>
<span class="t" style="left:1142.35px;top:453.83px;font-size:38px;color:#000;transform:scaleX(1.0620);">H</span>
<span class="t" style="left:960.63px;top:546.13px;font-size:38px;color:#000;transform:scaleX(1.0012);">H</span>
<span class="t" style="left:1477.46px;top:363.53px;font-size:38px;color:#000;transform:scaleX(1.0901);">H</span>
<span class="t" style="left:1568.45px;top:363.53px;font-size:38px;color:#000;transform:scaleX(1.0620);">H</span>
<span class="t" style="left:1386.56px;top:453.83px;font-size:38px;color:#000;transform:scaleX(1.0901);">H</span>
<span class="t" style="left:1658.66px;top:453.83px;font-size:38px;color:#000;transform:scaleX(1.0901);">H</span>
<span class="t" style="left:1478.20px;top:546.13px;font-size:38px;color:#000;transform:scaleX(1.0433);">H</span>
<span class="t" style="left:498.70px;top:453.53px;font-size:38px;color:#000;transform:scaleX(1.0105);">C</span>
<span class="t" style="left:589.60px;top:453.53px;font-size:38px;color:#000;transform:scaleX(1.0105);">C</span>
<span class="t" style="left:961.23px;top:454.33px;font-size:38px;color:#000;transform:scaleX(1.0475);">C</span>
<span class="t" style="left:1051.55px;top:454.33px;font-size:38px;color:#000;transform:scaleX(1.0393);">C</span>
<span class="t" style="left:1477.43px;top:454.33px;font-size:38px;color:#000;transform:scaleX(1.0475);">C</span>
<span class="t" style="left:1567.43px;top:454.33px;font-size:38px;color:#000;transform:scaleX(1.0516);">C</span>
<span class="t" style="left:602.87px;top:670.13px;font-size:38px;color:#000;transform:scaleX(0.9872);">Br</span>
<span class="t" style="left:1056.47px;top:598.63px;font-size:38px;color:#000;transform:scaleX(0.9872);">Br</span>
<span class="t" style="left:1562.22px;top:543.43px;font-size:38px;color:#000;transform:scaleX(1.0360);">Br</span>
<span class="t" style="left:638.24px;top:573.26px;font-size:24.5px;color:#ff3b1e;transform:scaleX(1.0566);-webkit-text-stroke:0.5px #ff3b1e;">∂+</span>
<span class="t" style="left:641.21px;top:654.56px;font-size:24.5px;color:#2a4dff;transform:scaleX(1.1018);-webkit-text-stroke:0.5px #2a4dff;">∂-</span>
<span class="t" style="left:1055.62px;top:487.41px;font-size:32px;color:#ff3b1e;transform:scaleX(1.1840);-webkit-text-stroke:0.5px #ff3b1e;">+</span>
<span class="t" style="left:1094.25px;top:575.25px;font-size:44px;color:#2a4dff;transform:scaleX(1.0524);">-</span>
</section>
<section class="sec" id="status-and-taskbar">
<!-- status bar -->
<div class="b " style="left:0px;top:965px;width:1879px;height:32.3px;background:#f3f2f1;border-top:1px solid #d4d2d0"></div>
<div class="b " style="left:1481.5px;top:966px;width:55px;height:31px;background:#c8c6c4;"></div>
<span class="t" style="left:10.57px;top:973.67px;font-size:14.8px;color:#5a5a5a;transform:scaleX(1.0028);">Page: 1 of 1</span>
<span class="t" style="left:146.07px;top:973.67px;font-size:14.8px;color:#5a5a5a;transform:scaleX(1.0131);">21.70, 15.95 cm.</span>
<span class="t" style="left:1792.34px;top:973.67px;font-size:14.8px;color:#5a5a5a;transform:scaleX(1.0495);">94%</span>
<svg width="1879" height="1056" viewBox="0 0 1879 1056"><path d="M123 970.500v15l3.600-3 2.400 5.800 2.300-1-2.400-5.700 4.600-.300z" fill="#444"/><rect x="301.500" y="973" width="17" height="13.500" fill="#fff" stroke="#555" stroke-width="1"/><rect x="302" y="973.500" width="16" height="8.500" fill="#555"/><g fill="none" stroke="#555" stroke-width="1"><rect x="1500.500" y="971.500" width="18" height="17"/><path d="M1503 975.500h13M1503 978.500h13M1503 981.500h13M1503 984.500h13"/><rect x="1556.500" y="971.500" width="17" height="17"/><path d="M1565 972v17M1559 976h4M1559 979h4M1559 982h4M1559 985h4M1567 976h4M1567 979h4M1567 982h4M1567 985h4" stroke-width="1.300"/></g><path d="M1599 980.300h11" stroke="#555" stroke-width="1.800"/><path d="M1616 980.500h144" stroke="#8a8886" stroke-width="1"/><rect x="1680.500" y="971.500" width="8" height="17.500" fill="#666"/><path d="M1766 980.300h12M1772 974.300v12" stroke="#555" stroke-width="1.800"/><g fill="none" stroke="#555" stroke-width="1"><rect x="1854" y="971.500" width="16.500" height="16.500"/><path d="M1862.300 974v4M1862.300 981.500v4M1856.500 979.800h4M1864 979.800h4" /></g></svg>
<span class="t" style="left:305.00px;top:974.15px;font-size:7.5px;color:#fff;font-weight:700;transform:scaleX(0.9998);">XY</span>
<!-- taskbar -->
<div class="b " style="left:0px;top:997.3px;width:1879px;height:58.7px;background:#1b2a30;"></div>
<div class="b " style="left:71.7px;top:997.3px;width:504px;height:58.7px;background:#f2f2f2;border:1px solid #f8f8f8;border-top:1px solid #b8b8b8;border-bottom:1.500px solid #e4e4e4"></div>
<div class="b " style="left:941px;top:997.3px;width:72px;height:58.7px;background:#40545a;"></div>
<div class="b " style="left:874px;top:1053.5px;width:60px;height:2.5px;background:#bfe9f2;"></div>
<div class="b " style="left:941px;top:1053.5px;width:72px;height:2.5px;background:#bfe9f2;"></div>
<div class="b " style="left:1020.8px;top:1053.5px;width:59.5px;height:2.5px;background:#bfe9f2;"></div>
<div class="b " style="left:1872.5px;top:997.3px;width:1px;height:58.7px;background:#5d6a6e;"></div>
<span class="t" style="left:130.22px;top:1016.87px;font-size:22.6px;color:#333;transform:scaleX(0.9687);">Type here to search</span>
<span class="t" style="left:1645.63px;top:1018.41px;font-size:17px;color:#fff;transform:scaleX(0.9229);">ENG</span>
<span class="t" style="left:1722.99px;top:1005.55px;font-size:16.6px;color:#fff;transform:scaleX(1.0508);">10:16</span>
<span class="t" style="left:1697.36px;top:1032.75px;font-size:16.6px;color:#fff;transform:scaleX(1.1245);">21/06/2020</span>
<svg width="1879" height="1056" viewBox="0 0 1879 1056"><g fill="#fff"><path d="M24 1017.400l9.300-1.300v9.300H24zM34.500 1015.900l12.200-1.800v11.300H34.500zM24 1026.600h9.300v9.300L24 1034.600zM34.500 1026.600h12.200v11.600l-12.200-1.800z"/></g><circle cx="103.500" cy="1022.500" r="7.600" fill="none" stroke="#222" stroke-width="1.700"/><path d="M98 1028l-9.300 9.500" stroke="#222" stroke-width="1.700"/><circle cx="611" cy="1025.800" r="10.300" fill="none" stroke="#fff" stroke-width="3.300"/><g fill="none" stroke="#fff" stroke-width="1.500"><rect x="671.500" y="1019.500" width="14.500" height="11"/><path d="M670 1015.500h17M670 1035h17M686.500 1014v3M686.500 1033v3"/><path d="M692.500 1014.500v6M692.500 1028v8" /><rect x="691.500" y="1022" width="2" height="3.500" fill="#fff" stroke="none"/></g><path d="M741 1016.500a2 2 0 0 1 2-2h9.500l2.500 2.500h15.500a2 2 0 0 1 2 2v18.500H741z" fill="#f5b73e"/><path d="M741 1020.500h31.500v17.500H741z" fill="#fbd566"/><path d="M747 1029h19.500v9.500H747z" fill="#3c8edc"/><path d="M751.500 1033h10.500v6h-10.500z" fill="#fbd566"/><circle cx="903.300" cy="1026.200" r="16.500" fill="#e84435"/><path d="M903.300 1026.200L889 1018a16.500 16.500 0 0 0 8.500 23.700z" fill="#33a853"/><path d="M903.300 1026.200l-5.800 15.500a16.500 16.500 0 0 0 21.800-19.500z" fill="#fbc016"/><path d="M889 1018a16.500 16.500 0 0 1 30.300 4.200H903.300z" fill="#e84435"/><circle cx="903.300" cy="1026.200" r="7.600" fill="#fff"/><circle cx="903.300" cy="1026.200" r="6" fill="#4a8af4"/><path d="M968 1011.500h23a2 2 0 0 1 2 2v27a2 2 0 0 1-2 2h-23z" fill="#3cbfae"/><path d="M968 1021.500h25v10.500h-25z" fill="#1f9c8e"/><path d="M968 1032h25v8.500a2 2 0 0 1-2 2h-23z" fill="#107c6f"/><rect x="958.700" y="1017" width="20" height="20" rx="1.800" fill="#0b6a5e"/><circle cx="1051.500" cy="1016.500" r="5.500" fill="#7b83eb"/><circle cx="1062.500" cy="1018.500" r="3.800" fill="#5059c9"/><path d="M1043 1023.500h18.500v11a8 8 0 0 1-8 8h-2.500a8 8 0 0 1-8-8z" fill="#7b83eb"/><path d="M1058 1023.500h9.500a1.500 1.500 0 0 1 1.500 1.500v7.500a5.500 5.500 0 0 1-11 0z" fill="#5059c9"/><rect x="1031.200" y="1017.500" width="19" height="19" rx="1.800" fill="#4b53bc"/><circle cx="1062" cy="1037" r="6.800" fill="#fff"/><circle cx="1062" cy="1037" r="5.500" fill="#8bc34a"/><path d="M1059 1037l2.300 2.300 4-4.300" fill="none" stroke="#fff" stroke-width="1.600"/><path d="M1216.500 1030.500l8.800-9 8.800 9" fill="none" stroke="#fff" stroke-width="1.600"/><ellipse cx="1272" cy="1026.300" rx="9.300" ry="12.200" fill="#1589ee"/><path d="M1267.500 1021.500l8.500 9-4.300 4v-17l4.300 4-8.500 9" fill="none" stroke="#fff" stroke-width="1.400"/><path fill-rule="evenodd" d="M1307.700 1015.200L1318.200 1022L1328.800 1015.200V1032.800L1318.200 1038.600L1307.700 1032.800zM1313 1024.500L1318.200 1028L1323.400 1024.500V1030.300L1318.200 1033.300L1313 1030.300z" fill="#8e9192"/><path d="M1325.300 1027.800l6 9.800h-12z" fill="#e5352b"/><g fill="#fff"><path d="M1359.500 1015.500l6 3.800-6 3.800-6-3.800zM1371.500 1015.500l6 3.800-6 3.800-6-3.800zM1365.500 1023.500l6 3.800-6 3.800-6-3.800zM1377.500 1027l-6 3.800-2-1.300 6-3.800zM1365.500 1032.500l4 2.500-4 2.500-4-2.500z"/></g><rect x="1353" y="1026" width="11.500" height="11.500" rx="1.500" fill="#d8232a"/><path d="M1404.500 1034.600a4.300 4.300 0 0 1-.8-8.500 6.500 6.500 0 0 1 11.800-2.800 5.500 5.500 0 0 1 7 4 3.800 3.800 0 0 1-.8 7.300z" fill="#e3e6e8"/><path d="M1404.500 1034.600a4.300 4.300 0 0 1-.8-8.500l18 8.500z" fill="#c2c7cb"/><rect x="1449" y="1021.500" width="20.500" height="11" fill="none" stroke="#fff" stroke-width="1.400"/><rect x="1451" y="1023.500" width="15.500" height="7" fill="#fff"/><rect x="1470.500" y="1025" width="1.800" height="4" fill="#fff"/><g fill="none" stroke="#fff" stroke-width="1.400"><path d="M1499 1036a18 18 0 0 1 18-18"/><path d="M1503.800 1036a13.200 13.200 0 0 1 13.200-13.200"/><path d="M1508.600 1036a8.400 8.400 0 0 1 8.400-8.400"/><path d="M1513 1036a4 4 0 0 1 4-4"/></g><circle cx="1516.300" cy="1035" r="1.600" fill="#fff"/><path d="M1543.500 1023h3.500l5-4.500v16l-5-4.500h-3.500z" fill="none" stroke="#fff" stroke-width="1.300"/><g fill="none" stroke="#fff" stroke-width="1.200"><path d="M1555 1023.500a4 4 0 0 1 0 6"/><path d="M1558 1020.800a8 8 0 0 1 0 11.400" opacity=".7"/><path d="M1561 1018.300a11.500 11.500 0 0 1 0 16.400" opacity=".35"/></g><g fill="none" stroke="#fff" stroke-width="1.500"><path d="M1608.500 1016.500c3 0 3.500 3 2 7l-5 11.500"/><path d="M1598 1031c2-4.500 9-7.500 14-6 4 1.300 3.500 5-1 6.500"/><path d="M1602 1035.500c-2.500 0-4-1.500-3.500-3.500"/></g><path d="M1818.500 1015h22.500v16.500h-8l-3.800 4.500-3.800-4.500h-6.900z" fill="none" stroke="#fff" stroke-width="1.400"/></svg>
<span class="t" style="left:813.09px;top:993.55px;font-size:57px;color:#1f7ddb;font-weight:700;transform:scaleX(1.0737);">e</span>
<span class="t" style="left:961.85px;top:1018.61px;font-size:17px;color:#fff;font-weight:700;transform:scaleX(1.0256);">P</span>
<span class="t" style="left:1035.88px;top:1018.61px;font-size:17px;color:#fff;font-weight:700;transform:scaleX(0.9383);">T</span>
<span class="t" style="left:1355.96px;top:1026.69px;font-size:11px;color:#fff;font-weight:700;transform:scaleX(0.8571);">1</span>
<span class="t" style="left:1324.81px;top:1031.07px;font-size:7px;color:#fff;font-weight:700;transform:scaleX(1.4222);">!</span>
</section>
</body></html>
